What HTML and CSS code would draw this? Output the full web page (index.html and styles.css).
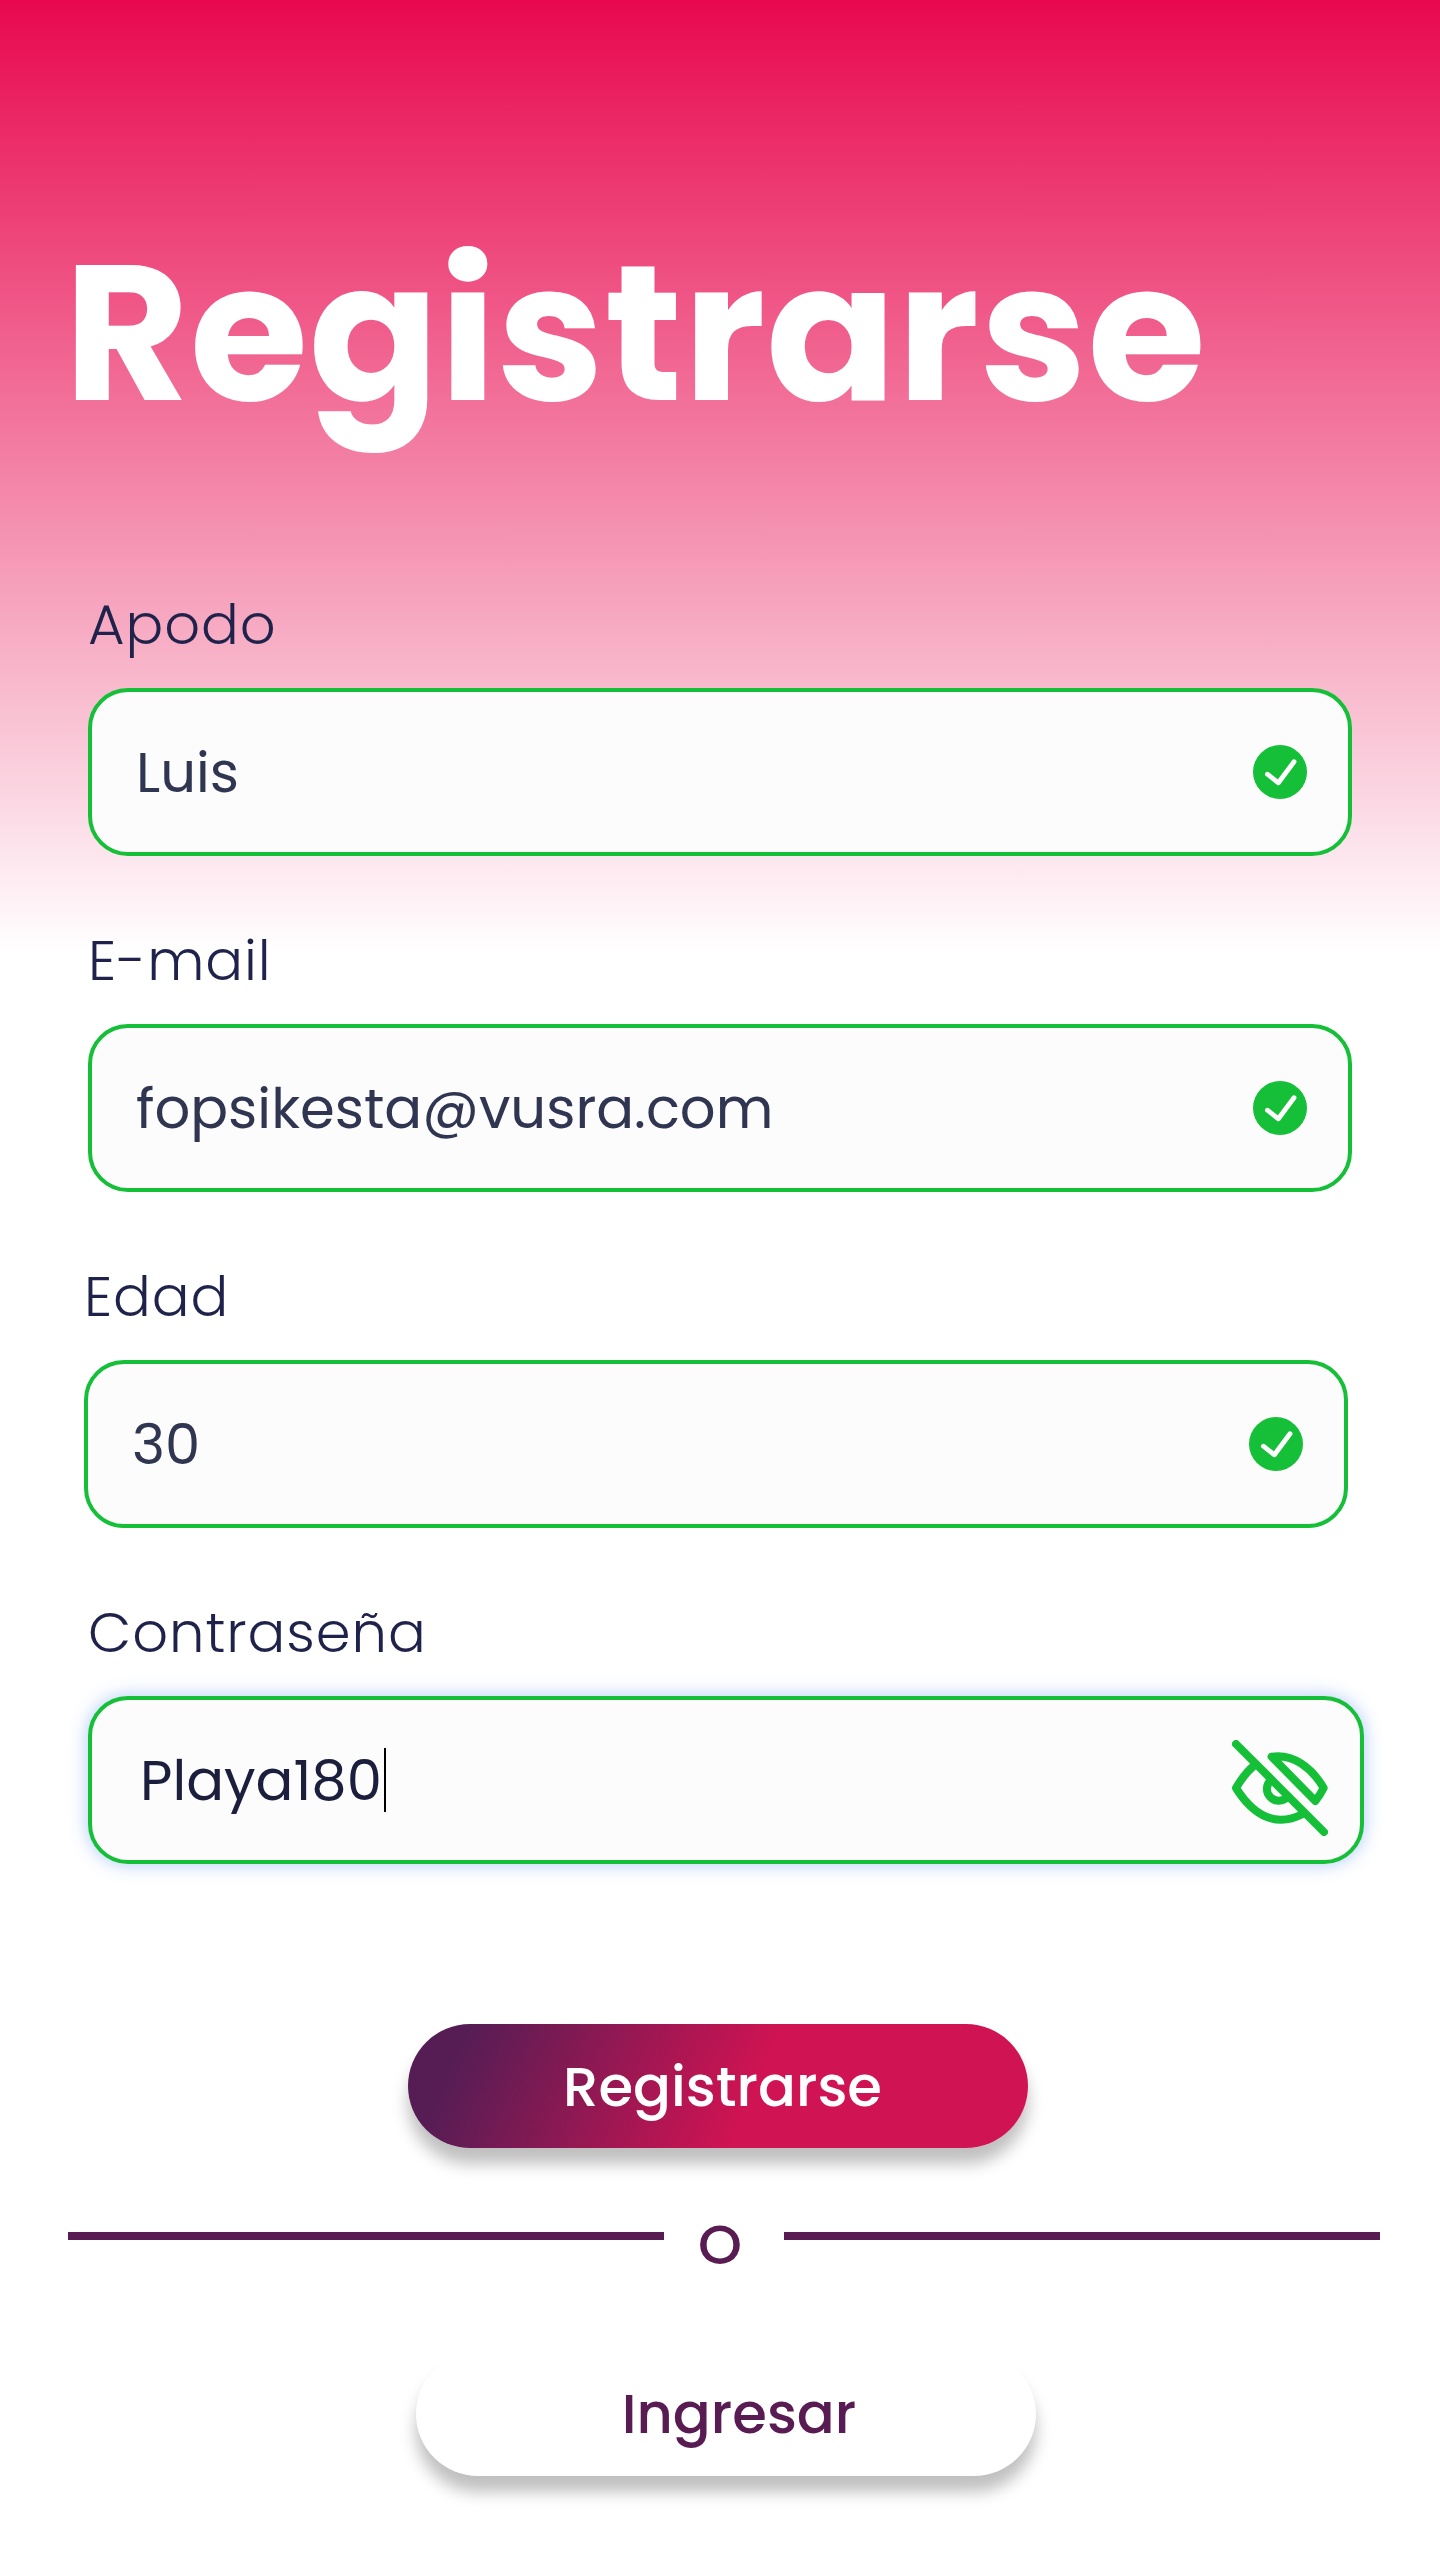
FILE: index.html
```
<!DOCTYPE html>
<html lang="es">
<head>
<meta charset="utf-8">
<title>Registrarse</title>
<link rel="stylesheet" href="styles.css">
</head>
<body>
<main class="screen">
  <h1 class="title">Registrarse</h1>
  <form class="form">
    <div class="field">
      <div class="label">Apodo</div>
      <div class="input">
        <span class="value">Luis</span>
        <svg class="check" viewBox="0 0 54 54"><circle cx="27" cy="27" r="27"/><path d="M14.4 29.2 25.4 37.8 41 16.8"/></svg>
      </div>
    </div>
    <div class="field">
      <div class="label">E-mail</div>
      <div class="input">
        <span class="value">fopsikesta@vusra.com</span>
        <svg class="check" viewBox="0 0 54 54"><circle cx="27" cy="27" r="27"/><path d="M14.4 29.2 25.4 37.8 41 16.8"/></svg>
      </div>
    </div>
    <div class="field field-age">
      <div class="label">Edad</div>
      <div class="input">
        <span class="value">30</span>
        <svg class="check" viewBox="0 0 54 54"><circle cx="27" cy="27" r="27"/><path d="M14.4 29.2 25.4 37.8 41 16.8"/></svg>
      </div>
    </div>
    <div class="field field-password">
      <div class="label">Contraseña</div>
      <div class="input input-focus">
        <span class="value">Playa180</span>
        <span class="caret"></span>
        <svg class="eye" viewBox="0 0 288 288">
          <path d="M12 12 276 276"/>
          <path d="M66 77C41 98 25 122 12 144C66 230 135 262 212 222"/>
          <path d="M119 50C184 40 240 84 275 144Q265 164 250 183Z"/>
          <path d="M118 119A35.500 35.500 0 1 0 167 170"/>
        </svg>
      </div>
    </div>
  </form>
  <div class="button button-primary">Registrarse</div>
  <div class="divider">
    <span class="rule"></span>
    <span class="or">O</span>
    <span class="rule"></span>
  </div>
  <div class="button button-secondary">Ingresar</div>
</main>
</body>
</html>
```
FILE: styles.css
```
* {
  box-sizing: border-box;
}

body {
  margin: 0;
  background: #fff;
  font-family: Poppins, Inter, sans-serif;
}

.screen {
  display: flex;
  flex-direction: column;
  width: 1440px;
  height: 2560px;
  padding-top: 189px;
  overflow: hidden;
  background: linear-gradient(180deg, #e8084f 0, #fff 952px) #fff;
}

.title {
  margin: 0 0 105px 64px;
  font-size: 192px;
  font-weight: 700;
  line-height: 288px;
  letter-spacing: 0.6px;
  color: #fff;
}

.form {
  display: flex;
  flex-direction: column;
  gap: 62px;
  padding-left: 88px;
}

.field {
  display: flex;
  flex-direction: column;
  gap: 20px;
  width: 1264px;
}

.field-age {
  margin-left: -4px;
}

.field-password {
  width: 1276px;
}

.label {
  font-size: 56px;
  font-weight: 300;
  line-height: 86px;
  letter-spacing: 0.95px;
  color: #1f234b;
}

.input {
  display: flex;
  align-items: center;
  height: 168px;
  padding: 0 41px 0 44px;
  border: 4px solid #15bf38;
  border-radius: 40px;
  background: #fcfcfc;
}

.input-focus {
  padding: 0 32px 0 48px;
  box-shadow: 0 0 18px rgba(75, 135, 240, 0.45);
}

.value {
  padding-top: 2px;
  font-size: 56px;
  line-height: 84px;
  color: #303651;
}

.input-focus .value {
  color: #1b1f3d;
}

.caret {
  width: 2px;
  height: 64px;
  margin-left: 2px;
  background: #000;
}

.check {
  width: 54px;
  height: 54px;
  margin-left: auto;
}

.check circle {
  fill: #15bf38;
}

.check path {
  fill: none;
  stroke: #fff;
  stroke-width: 4.8;
  stroke-linecap: round;
  stroke-linejoin: round;
}

.eye {
  width: 96px;
  height: 96px;
  margin: 16px 0 0 auto;
  fill: none;
  stroke: #15bf38;
  stroke-width: 24;
  stroke-linecap: round;
  stroke-linejoin: round;
}

.button {
  width: 620px;
  height: 124px;
  border-radius: 62px;
  box-shadow: 0 16px 16px rgba(0, 0, 0, 0.25);
  font-size: 56px;
  font-weight: 500;
  line-height: 124px;
  text-align: center;
}

.button-primary {
  margin: 160px 0 0 408px;
  padding-left: 9px;
  background: linear-gradient(114deg, #551d54 9%, #d01352 55.6%);
  line-height: 126px;
  color: #fff;
}

.divider {
  display: grid;
  grid-template-columns: 596px 120px 596px;
  height: 84px;
  margin: 54px 0 66px 68px;
}

.rule {
  height: 8px;
  margin-top: 30px;
  background: #581c52;
}

.or {
  padding-right: 8px;
  font-size: 56px;
  font-weight: 500;
  line-height: 86px;
  text-align: center;
  color: #581c52;
}

.button-secondary {
  margin-left: 416px;
  padding-left: 26px;
  background: #fff;
  color: #581c52;
}
```
